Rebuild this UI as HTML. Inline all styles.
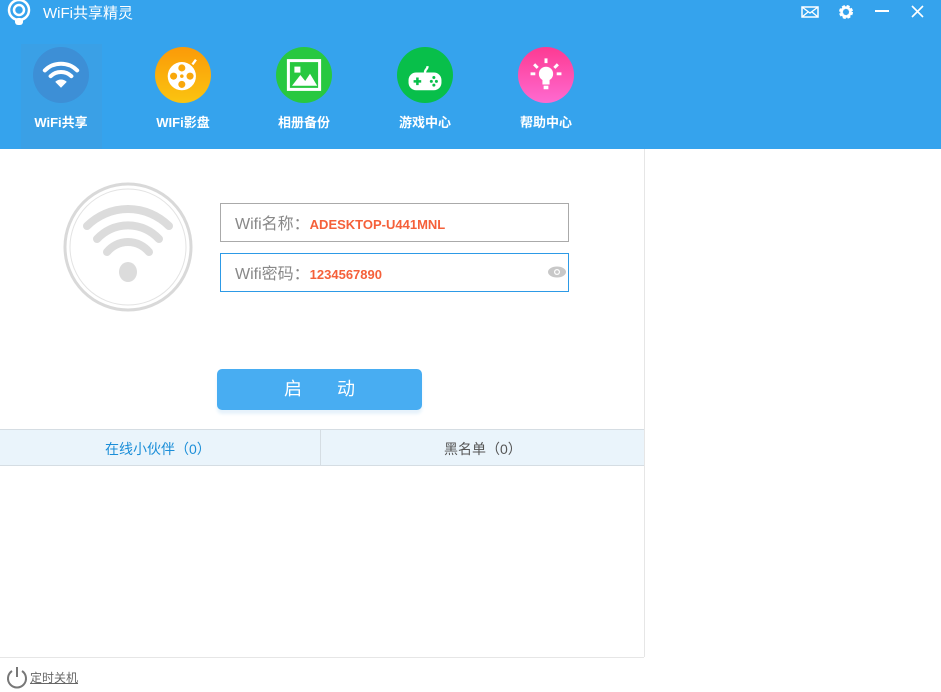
<!DOCTYPE html>
<html><head><meta charset="utf-8"><style>
*{margin:0;padding:0;box-sizing:border-box}
body{width:941px;height:692px;background:#fff;font-family:"Liberation Sans","Noto Sans CJK SC",sans-serif;position:relative;overflow:hidden}
.hdr{position:absolute;left:0;top:0;width:941px;height:149px;background:#35a3ed}
.title{position:absolute;left:43px;top:2px;color:#fff;font-size:15px}
.nav{position:absolute;top:47px;width:80px;text-align:center;color:#fff;font-size:13px;font-weight:bold}
.nav .c{width:56px;height:56px;border-radius:50%;margin:0 auto;display:flex;align-items:center;justify-content:center}
.nav span{display:block;margin-top:9px}
.sel{position:absolute;left:21px;top:44px;width:81px;height:105px;background:#3aa0e6}
.inp{position:absolute;left:220px;width:349px;height:39px;border:1px solid #aaa;font-size:16px;color:#888;padding:6px 0 0 14px}
.inp b{color:#f5603a;font-size:13px}
.btn{position:absolute;left:217px;top:369px;width:205px;height:41px;background:#48adf2;border-radius:5px;color:#fff;font-size:18px;text-align:center;line-height:41px;box-shadow:0 4px 3px #e6f2fb}
.tabs{position:absolute;left:0;top:429px;width:644px;height:37px;background:#eaf4fb;border-top:1px solid #d5dde3;border-bottom:1px solid #d5dde3;font-size:14px}
.tabs div{position:absolute;top:9px}
</style></head><body>
<div class="hdr">
<svg style="position:absolute;left:5px;top:0" width="30" height="26" viewBox="0 0 30 26"><circle cx="14" cy="10" r="10" fill="none" stroke="#fff" stroke-width="2.5"/><circle cx="14" cy="10" r="5" fill="none" stroke="#fff" stroke-width="2.5"/><rect x="10" y="18" width="8" height="7" rx="3" fill="#fff"/></svg>
<div class="title">WiFi共享精灵</div>
<svg style="position:absolute;left:801px;top:6px" width="18" height="12"><rect x="1" y="1" width="16" height="10" fill="none" stroke="#fff" stroke-width="1.5"/><path d="M1 1l8 6 8-6M1 11l6-5M17 11l-6-5" stroke="#fff" fill="none" stroke-width="1.3"/></svg>
<svg style="position:absolute;left:838px;top:4px" width="16" height="16" viewBox="0 0 16 16"><circle cx="8" cy="8" r="5" fill="none" stroke="#fff" stroke-width="4" stroke-dasharray="2.5 1.5"/><circle cx="8" cy="8" r="4.5" fill="none" stroke="#fff" stroke-width="2.5"/></svg>
<div style="position:absolute;left:875px;top:10px;width:14px;height:2px;background:#fff"></div>
<svg style="position:absolute;left:911px;top:5px" width="13" height="13"><path d="M1 1l11 11M12 1L1 12" stroke="#fff" stroke-width="1.6"/></svg>
<div class="sel"></div>
<div class="nav" style="left:21px"><div class="c" style="background:#3d8fd6"><svg width="40" height="30" viewBox="0 0 34 26"><path d="M3 9a20 20 0 0 1 28 0M8 14a13 13 0 0 1 18 0" fill="none" stroke="#fff" stroke-width="3.5" stroke-linecap="round"/><path d="M12 19l5 5 5-5a7 7 0 0 0-10 0z" fill="#fff"/></svg></div><span>WiFi共享</span></div>
<div class="nav" style="left:143px"><div class="c" style="background:linear-gradient(#fb9a08,#fbc410)"><svg width="40" height="40" viewBox="0 0 34 34"><circle cx="16" cy="18" r="12" fill="#fff"/><circle cx="16" cy="11" r="3" fill="#f9a80b"/><circle cx="16" cy="25" r="3" fill="#f9a80b"/><circle cx="9" cy="18" r="3" fill="#f9a80b"/><circle cx="23" cy="18" r="3" fill="#f9a80b"/><circle cx="16" cy="18" r="1.5" fill="#f9a80b"/><path d="M25 8l3-4" stroke="#fff" stroke-width="2"/></svg></div><span>WIFi影盘</span></div>
<div class="nav" style="left:264px"><div class="c" style="background:#28c840"><svg width="36" height="34" viewBox="0 0 30 28"><rect x="2" y="2" width="26" height="24" fill="none" stroke="#fff" stroke-width="2.5"/><rect x="7" y="7" width="5" height="5" fill="#fff"/><path d="M5 23l7-9 4 5 4-6 6 10z" fill="#fff"/></svg></div><span>相册备份</span></div>
<div class="nav" style="left:385px"><div class="c" style="background:#08bf4a"><svg width="38" height="38" viewBox="0 0 30 30"><path d="M15 13c0-3 2-2 2-5" stroke="#fff" stroke-width="1.8" fill="none"/><rect x="2" y="13" width="26" height="14" rx="6" fill="#fff"/><path d="M6 20h6M9 17v6" stroke="#08bf4a" stroke-width="2"/><circle cx="20" cy="20" r="1.2" fill="#08bf4a"/><circle cx="24" cy="20" r="1.2" fill="#08bf4a"/><circle cx="22" cy="17" r="1.2" fill="#08bf4a"/><circle cx="22" cy="23" r="1.2" fill="#08bf4a"/></svg></div><span>游戏中心</span></div>
<div class="nav" style="left:506px"><div class="c" style="background:linear-gradient(#fd3a92,#fe6ad0)"><svg width="36" height="38" viewBox="0 0 30 32"><circle cx="15" cy="15" r="6" fill="#fff"/><rect x="12" y="19" width="6" height="5" fill="#fff"/><rect x="13" y="25" width="4" height="3" fill="#fff"/><path d="M15 2v4M5 7l3 3M25 7l-3 3M2 15h4M24 15h4" stroke="#fff" stroke-width="2.5"/></svg></div><span>帮助中心</span></div>
</div>
<div style="position:absolute;left:644px;top:149px;width:1px;height:508px;background:#e6e6e6"></div>
<div style="position:absolute;left:0;top:657px;width:644px;height:1px;background:#e6e6e6"></div>
<svg style="position:absolute;left:62px;top:181px" width="132" height="132"><circle cx="66" cy="66" r="63" fill="none" stroke="#d9d9d9" stroke-width="3"/><circle cx="66" cy="66" r="58" fill="none" stroke="#e3e3e3" stroke-width="1"/><path d="M25 45a58 58 0 0 1 82 0M35 58a42 42 0 0 1 62 0M45 71a27 27 0 0 1 42 0" fill="none" stroke="#dcdcdc" stroke-width="8" stroke-linecap="round"/><ellipse cx="66" cy="91" rx="9" ry="10" fill="#dcdcdc"/></svg>
<div class="inp" style="top:203px">Wifi名称：<b>ADESKTOP-U441MNL</b></div>
<div class="inp" style="top:253px;border-color:#2d9ae6">Wifi密码：<b>1234567890</b>
<svg style="position:absolute;right:2px;top:12px" width="18" height="12"><ellipse cx="9" cy="6" rx="9" ry="5.5" fill="#c8c8c8"/><circle cx="9" cy="6" r="3" fill="#fff"/><circle cx="9" cy="6" r="1.8" fill="#c8c8c8"/></svg></div>
<div class="btn">启&nbsp;&nbsp;&nbsp;&nbsp;&nbsp;&nbsp;&nbsp;动</div>
<div class="tabs"><div style="left:105px;color:#1b8ed8">在线小伙伴（0）</div><div style="left:320px;top:0;width:1px;height:35px;background:#d5dde3"></div><div style="left:444px;color:#555">黑名单（0）</div></div>
<svg style="position:absolute;left:5px;top:664px" width="24" height="26"><path d="M7 7a9 9 0 1 0 10 0" fill="none" stroke="#777" stroke-width="2"/><path d="M12 3v10" stroke="#777" stroke-width="2"/></svg>
<div style="position:absolute;left:30px;top:669px;font-size:12px;color:#666;text-decoration:underline">定时关机</div>
</body></html>
